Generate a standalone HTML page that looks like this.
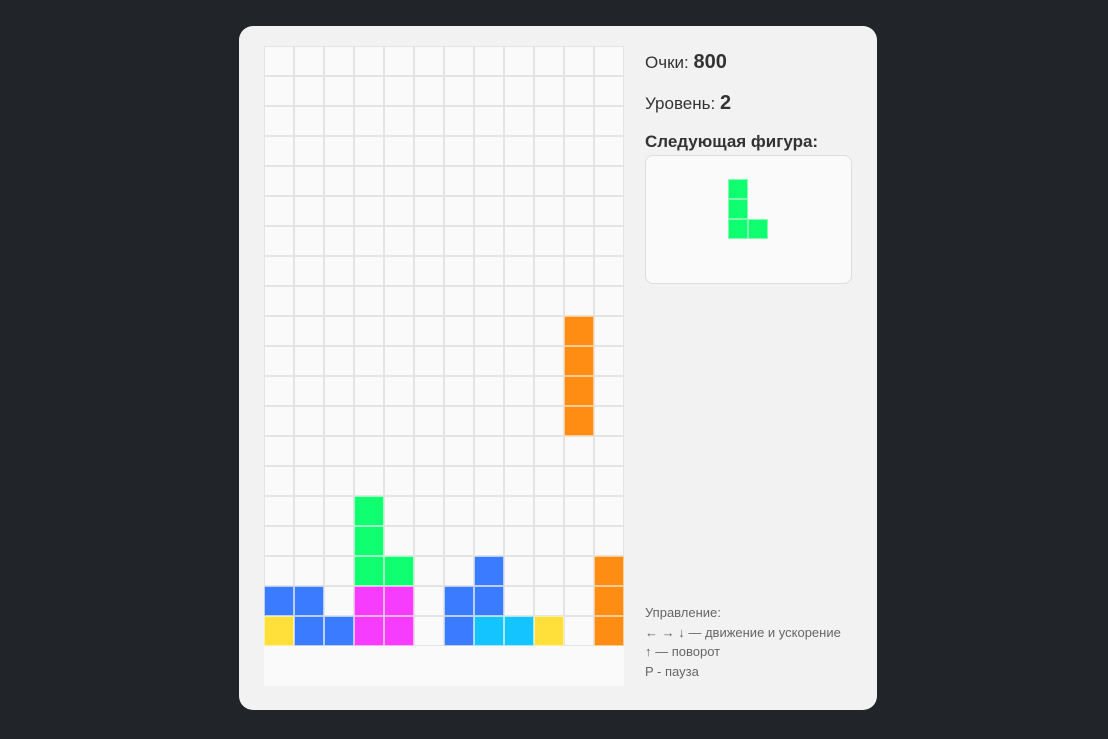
<!DOCTYPE html>
<html><head><meta charset="utf-8"><style>
body{margin:0;width:1108px;height:739px;background:#212428;font-family:"Liberation Sans",sans-serif;position:relative;overflow:hidden}
.card{position:absolute;left:239px;top:26px;width:638px;height:684px;background:#f2f2f2;border-radius:14px}
.t{position:absolute;left:645px;color:#333;font-size:17px;white-space:nowrap}
.t b{font-size:20px}
.prev{position:absolute;left:645px;top:155px;width:205px;height:127px;background:#fafafa;border:1px solid #ddd;border-radius:8px}
.ctl{position:absolute;left:645px;top:603px;font-size:13px;line-height:19.5px;color:#666}
</style></head><body>
<div class="card"></div>
<svg style="position:absolute;left:264px;top:46px" width="360" height="640" id="b">
<rect width="360" height="640" fill="#fafafa"/>
<g id="g"></g>
</svg>
<div class="t" style="top:51px">Очки: <b>800</b></div>
<div class="t" style="top:92px">Уровень: <b>2</b></div>
<div class="t" style="top:132px;font-weight:bold">Следующая фигура:</div>
<div class="prev"></div>
<svg style="position:absolute;left:0;top:0" width="1108" height="739">
<g fill="#0fff70" stroke="#7dffb0" stroke-width="1">
<rect x="728.5" y="179.5" width="19" height="19"/>
<rect x="728.5" y="199.5" width="19" height="19"/>
<rect x="728.5" y="219.5" width="19" height="19"/>
<rect x="748.5" y="219.5" width="19" height="19"/>
</g></svg>
<div class="ctl">Управление:<br>← → ↓ — движение и ускорение<br>↑ — поворот<br>P - пауза</div>
<script>
var C={b:"#3a7bff",y:"#ffdf3a",m:"#f53cff",g:"#0fff70",c:"#13c4ff",o:"#ff8c13"};
var L={b:"#b8d0ff",y:"#fff0a0",m:"#fcb0ff",g:"#9dffc4",c:"#a8e8ff",o:"#ffcb95"};
var F={"10,9":"o","10,10":"o","10,11":"o","10,12":"o","3,15":"g","3,16":"g","3,17":"g","4,17":"g","7,17":"b","11,17":"o",
"0,18":"b","1,18":"b","3,18":"m","4,18":"m","6,18":"b","7,18":"b","11,18":"o",
"0,19":"y","1,19":"b","2,19":"b","3,19":"m","4,19":"m","6,19":"b","7,19":"c","8,19":"c","9,19":"y","11,19":"o"};
var s="";
for(var r=0;r<20;r++)for(var c=0;c<12;c++){var k=F[c+","+r];
if(k)s+='<rect x="'+(c*30+0.5)+'" y="'+(r*30+0.5)+'" width="29" height="29" fill="'+C[k]+'" stroke="'+L[k]+'"/>';
else s+='<rect x="'+(c*30+0.5)+'" y="'+(r*30+0.5)+'" width="29" height="29" fill="#fafafa" stroke="#e4e4e4"/>';}
document.getElementById("g").innerHTML=s;
</script>
</body></html>
